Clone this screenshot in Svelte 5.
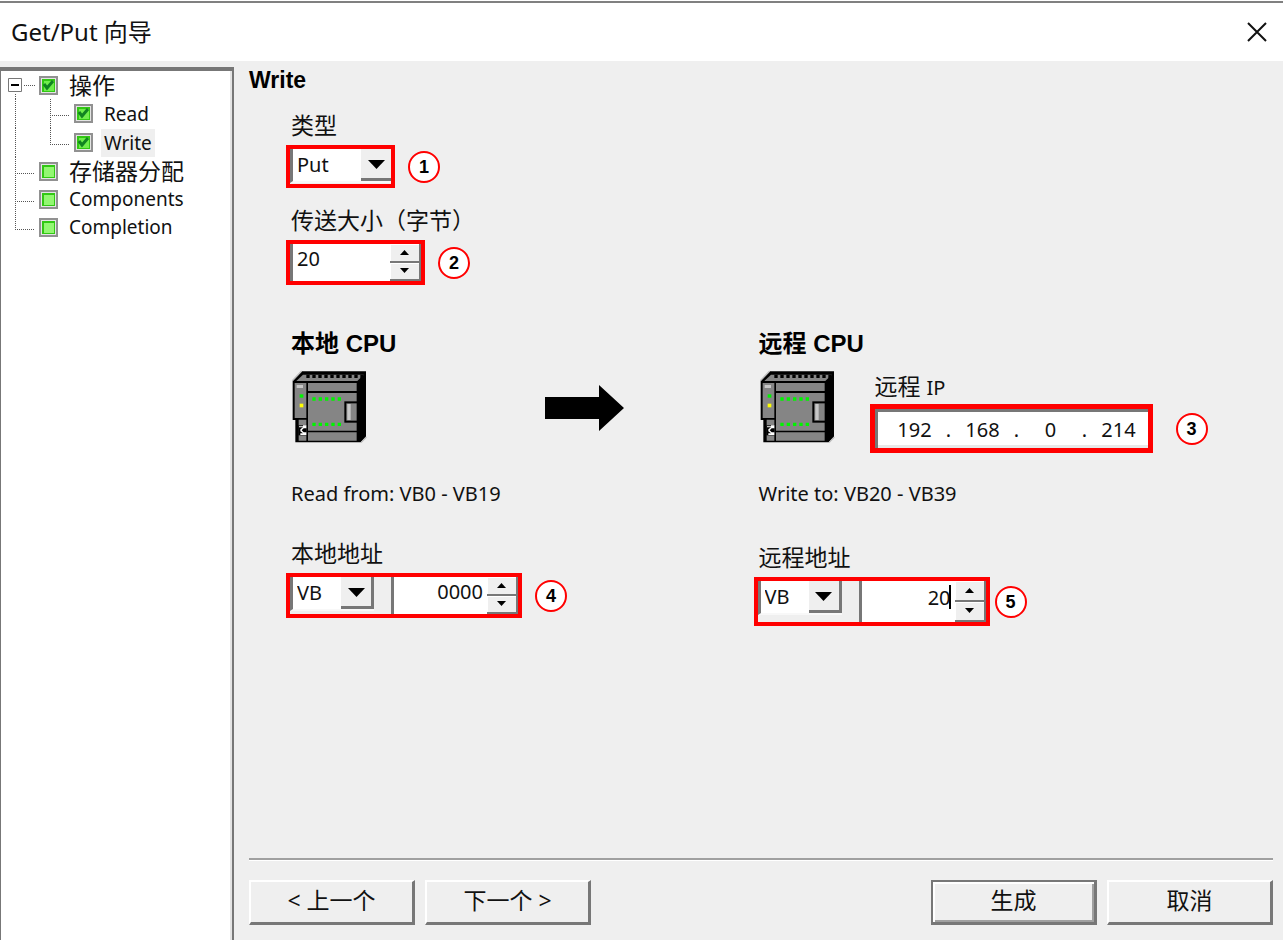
<script>
	let type = $state('Put');
	let size = $state(20);
	let ip = $state(['192', '168', '0', '214']);
	let localArea = $state('VB');
	let localAddress = $state('0000');
	let remoteArea = $state('VB');
	let remoteAddress = $state('20');

	const steps = [
		{ name: '操作', level: 0, done: true, root: true, cjk: true },
		{ name: 'Read', level: 1, done: true },
		{ name: 'Write', level: 1, done: true, active: true, last: true },
		{ name: '存储器分配', level: 0, cjk: true },
		{ name: 'Components', level: 0 },
		{ name: 'Completion', level: 0, last: true }
	];

	const areas = ['VB', 'IB', 'QB', 'MB'];

	function pad(n) {
		return String(Math.max(0, n)).padStart(4, '0');
	}
</script>

{#snippet plc()}
	<svg class="plc" viewBox="18 18 228 222" aria-hidden="true">
		<path d="M23 51L51 22H243V218L227 235H31V168H23z" fill="#000" />
		<path d="M22 50L50 21M228 236L244 219" stroke="#bbb" stroke-width="4" />
		<path d="M34 51L54 32H236L217 51z" fill="#858585" />
		<path d="M64 37H234" stroke="#000" stroke-width="10" stroke-dasharray="10 8" />
		<path d="M29 57H64V162H29zM41 167H64V230H41zM69 57H215V81H69zM69 87H215V200H69zM69 205H215V230H69z" fill="#858585" />
		<path d="M178 112H216V176H178z" fill="#000" />
		<path d="M184 118H215V170H184z" fill="#858585" />
		<path d="M187 120H197V168H187zM35 63H54V72H35z" fill="#c8c8c8" />
		<path d="M40 184H64V214H40z" fill="#000" />
		<path d="M64 184V193H56L50 199L56 205H64V213H46V208H54L46 202V196L54 190H42V187H54V184z" fill="#fff" />
		<path d="M44 91H55V101H44z" fill="#00f500" />
		<path d="M44 119H55V130H44z" fill="#ff0" />
		<path d="M82 105H170M82 181H170" stroke="#00f500" stroke-width="10" stroke-dasharray="10 9" />
	</svg>
{/snippet}

{#snippet combo(id, name, options, value, onpick)}
	<div class="combo">
		<select {id} aria-label={name} {value} onchange={(e) => onpick(e.target.value)}>
			{#each options as o}
				<option value={o}>{o}</option>
			{/each}
		</select>
		<span class="drop">
			<svg width="17" height="9" viewBox="0 0 17 9"><path d="M0 0H17L8.5 9z" /></svg>
		</span>
	</div>
{/snippet}

{#snippet arrows(onstep)}
	<div class="arrows">
		<button type="button" aria-label="增加" onclick={() => onstep(1)}>
			<svg width="9" height="5" viewBox="0 0 9 5"><path d="M0 5H9L4.5 0z" /></svg>
		</button>
		<button type="button" aria-label="减少" onclick={() => onstep(-1)}>
			<svg width="9" height="5" viewBox="0 0 9 5"><path d="M0 0H9L4.5 5z" /></svg>
		</button>
	</div>
{/snippet}

<div class="window">
	<header>
		<span>Get/Put 向导</span>
		<button type="button" class="close" aria-label="关闭">
			<svg width="20" height="20" viewBox="0 0 20 20"><path d="M1 1L19 19M19 1L1 19" /></svg>
		</button>
	</header>

	<div class="body">
		<nav>
			<ul>
				{#each steps as step}
					{@const h = step.level ? 29 : 28}
					{@const w = step.level ? 74 : 39}
					{@const x = step.level ? 50 : 15}
					<li>
						<svg class="lines" width={w} height={h}>
							{#if step.root}
								<path class="dots" d="M24 14.5H36M15.5 23V28" />
								<path d="M8.5 7.5H21.5V20.5H8.5z" fill="#fff" stroke="#777" />
								<path d="M11 14H19" stroke="#000" stroke-width="2" />
							{:else}
								{#if step.level}
									<path class="dots" d="M15.5 0V{h}" />
								{/if}
								<path class="dots" d="M{x}.5 0V{step.last ? 17 : h}M{x} 16.5H{w - 4}" />
							{/if}
						</svg>
						<svg class="mark" width="19" height="19" viewBox="0 0 19 19">
							<rect x="1" y="1" width="17" height="17" fill="#e4e4e4" stroke="#919191" stroke-width="2" />
							<rect x="3" y="3" width="13" height="13" fill="#32c814" />
							<rect x="5" y="5" width="10" height="10" fill={step.done ? '#70ee4c' : '#93f772'} />
							{#if step.done}
								<path d="M5 8L8 12L14 5" fill="none" stroke="#118422" stroke-width="3" />
							{/if}
						</svg>
						<a href="#step" class:active={step.active} class:cjk={step.cjk}>{step.name}</a>
					</li>
				{/each}
			</ul>
		</nav>

		<main>
			<h1>Write</h1>

			<form>
				<div class="field">
					<label for="type">类型</label>
					<div class="row">
						<div class="frame type">
							{@render combo('type', '类型', ['Get', 'Put'], type, (v) => (type = v))}
						</div>
						<span class="badge">1</span>
					</div>
				</div>

				<div class="field">
					<label for="size">传送大小（字节）</label>
					<div class="row">
						<div class="frame size">
							<div class="spin">
								<input id="size" type="text" bind:value={size} />
								{@render arrows((d) => (size = Number(size) + d))}
							</div>
						</div>
						<span class="badge">2</span>
					</div>
				</div>

				<div class="cpus">
					<section>
						<h2>本地 CPU</h2>
						<div class="device">
							{@render plc()}
							<svg class="transfer" width="79" height="46" viewBox="0 0 79 46" aria-hidden="true">
								<path d="M0 12H54V0L79 23L54 46V34H0z" />
							</svg>
						</div>
						<p>Read from: VB0 - VB19</p>
						<div class="address">
							<label for="local">本地地址</label>
							<div class="row">
								<div class="frame">
									{@render combo('local-area', '本地存储区', areas, localArea, (v) => (localArea = v))}
									<div class="spin right">
										<input id="local" type="text" bind:value={localAddress} />
										{@render arrows((d) => (localAddress = pad(Number(localAddress) + d)))}
									</div>
								</div>
								<span class="badge">4</span>
							</div>
						</div>
					</section>

					<section>
						<h2>远程 CPU</h2>
						<div class="device">
							{@render plc()}
							<div class="remote">
								<label for="ip0">远程 <small>IP</small></label>
								<div class="row">
									<div class="frame ip">
										<div class="octets">
											{#each ip as _, i}
												{#if i > 0}<span>.</span>{/if}
												<input id="ip{i}" type="text" maxlength="3" aria-label="IP {i + 1}" bind:value={ip[i]} />
											{/each}
										</div>
									</div>
									<span class="badge">3</span>
								</div>
							</div>
						</div>
						<p>Write to: VB20 - VB39</p>
						<div class="address">
							<label for="remote">远程地址</label>
							<div class="row near">
								<div class="frame tall">
									{@render combo('remote-area', '远程存储区', areas, remoteArea, (v) => (remoteArea = v))}
									<div class="spin right">
										<input id="remote" type="text" bind:value={remoteAddress} />
										<i class="caret"></i>
										{@render arrows((d) => (remoteAddress = String(Number(remoteAddress) + d)))}
									</div>
								</div>
								<span class="badge">5</span>
							</div>
						</div>
					</section>
				</div>
			</form>

			<footer>
				<button type="button">&lt; 上一个</button>
				<button type="button">下一个 &gt;</button>
				<button type="button" class="default">生成</button>
				<button type="button">取消</button>
			</footer>
		</main>
	</div>
</div>

<style>
:global(body) {
	margin: 0;
}

.window {
	box-sizing: border-box;
	min-height: 100vh;
	display: flex;
	flex-direction: column;
	padding-top: 1px;
	background: #fff;
	color: #111;
	font: 20px/28px "Noto Sans", "Noto Sans CJK SC", sans-serif;
}

.window * {
	box-sizing: border-box;
}

header {
	display: flex;
	justify-content: space-between;
	align-items: center;
	height: 60px;
	padding: 0 16px 0 11px;
	border-top: 2px solid #808080;
	font-size: 24px;
}

button, input, select {
	font: inherit;
	color: inherit;
	margin: 0;
	padding: 0;
	border: 0;
	border-radius: 0;
	background: none;
	outline: 0;
}

.close {
	display: flex;
}

.close path {
	stroke: #111;
	stroke-width: 2;
}

.body {
	flex: 1;
	display: flex;
	background: #efefef;
}

/* step tree */
nav {
	flex: 0 0 234px;
	margin-top: 6px;
	border: solid #777;
	border-width: 4px 2px 0 1px;
	background: #fff;
	box-shadow: inset -2px 0 #e4e4e4;
}

ul {
	list-style: none;
	margin: 0;
	padding: 0;
}

li {
	display: flex;
	align-items: center;
	margin-left: -1px;
}

.lines {
	display: block;
	flex: none;
}

.dots {
	fill: none;
	stroke: #555;
	stroke-dasharray: 1 1;
}

.mark {
	flex: none;
}

li a {
	margin-left: 8px;
	padding: 0 3px;
	color: inherit;
	font-size: 19px;
	text-decoration: none;
	white-space: nowrap;
}

li a.cjk {
	font-size: 23px;
}

li a.active {
	background: #efefef;
}

/* page */
main {
	flex: 1;
	min-width: 0;
	display: flex;
	flex-direction: column;
	padding: 4px 10px 15px 15px;
}

h1, h2 {
	margin: 0;
	color: #000;
	font: bold 23px/30px "Liberation Sans", "Noto Sans CJK SC", sans-serif;
}

h2 {
	padding-left: 5px;
	font-size: 24px;
	line-height: 32px;
}

form {
	flex: 1;
	padding-left: 37px;
}

label {
	display: block;
	padding-left: 5px;
	font-size: 23px;
	line-height: 32px;
}

.field {
	margin-top: 16px;
}

h1 + form .field:first-child {
	margin-top: 14px;
}

.row {
	display: flex;
	align-items: center;
	gap: 13px;
	margin-top: 4px;
}

.row.near {
	gap: 5px;
}

.frame {
	flex: none;
	display: flex;
	justify-content: space-between;
	width: 236px;
	height: 45px;
	border: 4px solid #f00;
}

.frame.tall {
	height: 49px;
}

.frame.type {
	width: 109px;
	height: 43px;
}

.frame.type .combo {
	flex: 1;
}

.frame.size {
	width: 139px;
}

.badge {
	flex: none;
	display: flex;
	align-items: center;
	justify-content: center;
	width: 32px;
	height: 32px;
	border: 2px solid #f00;
	border-radius: 50%;
	background: #fff;
	color: #000;
	font: bold 18px/20px "Liberation Sans", sans-serif;
}

.combo {
	display: grid;
	width: 84px;
	height: 34px;
	border-left: 3px solid #777;
	border-bottom: 2px solid #f8f8f8;
	background: #fff;
}

.combo select {
	grid-area: 1 / 1;
	appearance: none;
	padding-left: 4px;
}

.drop {
	grid-area: 1 / 1;
	justify-self: end;
	display: flex;
	align-items: center;
	justify-content: center;
	width: 33px;
	padding-top: 2px;
	border: solid #777;
	border-width: 0 3px 3px 0;
	background: #efefef;
	pointer-events: none;
}

.type .drop {
	width: 30px;
	border-right: 0;
}

.spin {
	position: relative;
	flex: 1;
	min-width: 0;
	display: flex;
	border-left: 3px solid #777;
	background: #fff;
}

.spin input {
	flex: 1;
	width: 100%;
	min-width: 0;
	padding: 0 4px 8px;
}

.spin.right {
	flex: 0 0 127px;
}

.spin.right input {
	text-align: right;
}

.caret {
	position: absolute;
	top: 4px;
	right: 35px;
	width: 2px;
	height: 24px;
	background: #000;
}

.arrows {
	flex: none;
	display: flex;
	flex-direction: column;
	width: 31px;
}

.arrows button {
	flex: 1;
	display: flex;
	align-items: center;
	justify-content: center;
	border: solid #777;
	border-width: 0 2px 2px 0;
	background: #efefef;
	box-shadow: inset 1px 1px #fff;
}

.cpus {
	display: grid;
	grid-template-columns: 9fr 10fr;
	margin-top: 43px;
}

.device {
	display: flex;
	align-items: flex-start;
	height: 80px;
	margin-top: 10px;
	padding-left: 5px;
}

.plc {
	width: 76px;
	height: 74px;
}

.transfer {
	margin: 15px 0 0 178px;
}

.remote {
	margin-left: 35px;
}

.remote small {
	font-size: 20px;
}

.remote .row {
	gap: 23px;
	margin-top: 0;
}

.frame.ip {
	width: 283px;
	height: 49px;
	border-width: 5px;
}

.octets {
	flex: 1;
	display: flex;
	align-items: center;
	padding-left: 13px;
	border: solid #777;
	border-width: 3px 0 0 3px;
	box-shadow: inset 0 -3px #e8e8e8;
	background: #fff;
}

.octets input {
	width: 48px;
	text-align: center;
}

.octets span {
	width: 20px;
	text-align: center;
}

p {
	margin: 28px 0 0;
	padding-left: 5px;
	line-height: 32px;
}

.address {
	margin-top: 27px;
}

section + section .address {
	margin-top: 31px;
}

footer {
	display: flex;
	gap: 10px;
	padding-top: 20px;
	border-top: 2px solid #a0a0a0;
	box-shadow: inset 0 1px #fff;
}

footer button {
	width: 166px;
	height: 45px;
	padding-bottom: 4px;
	border: solid;
	border-width: 2px 3px 3px 2px;
	border-color: #fff #777 #777 #fff;
	font-size: 23px;
}

footer .default {
	margin-left: auto;
	border-color: #777;
	box-shadow: inset 2px 2px #fff, inset -2px -2px #a0a0a0;
}
</style>
